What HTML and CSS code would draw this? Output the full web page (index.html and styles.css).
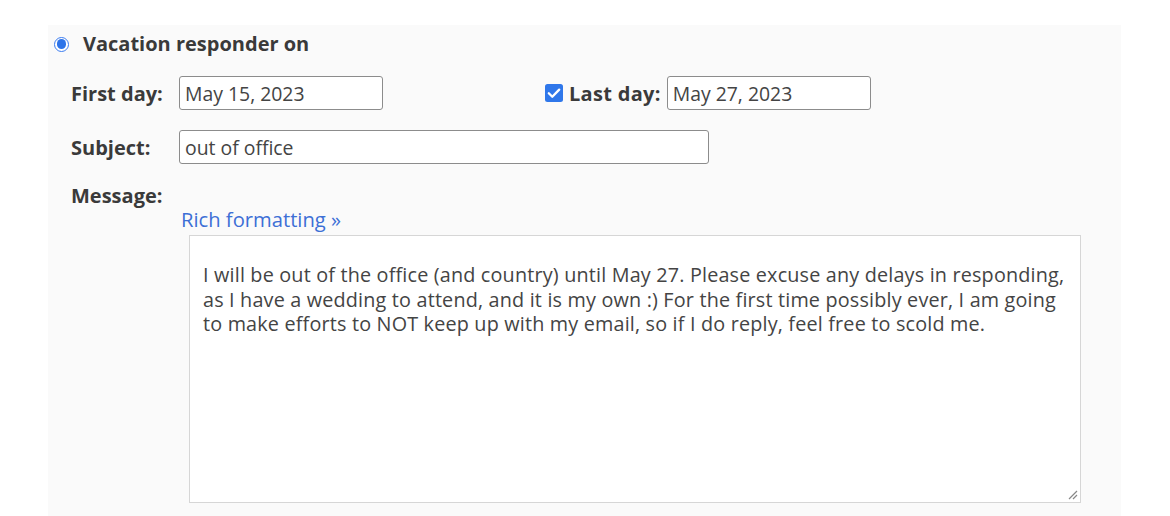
FILE: index.html
```html
<!DOCTYPE html>
<html>
<head>
<meta charset="utf-8">
<link rel="stylesheet" href="styles.css">
</head>
<body>
<div class="panel">
  <div class="head">
    <span class="radio"><span class="dot"></span></span>
    <span class="head-label">Vacation responder on</span>
  </div>
  <div class="form">
    <div class="row">
      <div class="label">First day:</div>
      <div class="field-row">
        <div class="input date">May 15, 2023</div>
        <div class="last">
          <span class="check"><svg viewBox="0 0 18 18" width="18" height="18"><rect x="0" y="0" width="18" height="18" rx="2.5" fill="#2f77ea"/><path d="M3.8 9.3 L7.3 12.7 L14.2 5.6" fill="none" stroke="#fff" stroke-width="2.3" stroke-linecap="round" stroke-linejoin="round"/></svg></span>
          <span class="label inline">Last day:</span>
          <div class="input date">May 27, 2023</div>
        </div>
      </div>
    </div>
    <div class="row">
      <div class="label">Subject:</div>
      <div class="input subject">out of office</div>
    </div>
    <div class="row msg">
      <div class="label">Message:</div>
    </div>
    <div class="rich-wrap">
      <a class="rich">Rich formatting »</a>
      <div class="textarea">I will be out of the office (and country) until May 27. Please excuse any delays in responding, as I have a wedding to attend, and it is my own :) For the first time possibly ever, I am going to make efforts to NOT keep up with my email, so if I do reply, feel free to scold me.<svg class="grip" viewBox="0 0 12 12" width="12" height="12"><path d="M11 3 L3 11 M11 7 L7 11" stroke="#888" stroke-width="1.2"/></svg></div>
    </div>
  </div>
</div>
</body>
</html>
```

FILE: styles.css
```css
* { box-sizing: border-box; }
html, body { margin: 0; padding: 0; background: #ffffff; }
body {
  font-family: "Open Sans", Roboto, "Liberation Sans", Arial, sans-serif;
  color: #3c4043;
  width: 1170px;
  height: 516px;
  overflow: hidden;
}
.panel {
  margin: 25px 0 0 48px;
  width: 1073px;
  height: 491px;
  background: #fafafa;
  padding: 7px 0 0 6px;
}
.head {
  display: flex;
  align-items: center;
  height: 22px;
}
.radio {
  width: 15px;
  height: 15px;
  border-radius: 50%;
  border: 1.5px solid #3b7cf0;
  display: flex;
  align-items: center;
  justify-content: center;
  background: #fff;
  margin-top: 2px;
}
.dot {
  width: 9.5px;
  height: 9.5px;
  border-radius: 50%;
  background: #2d74e9;
}
.head-label {
  margin-left: 14px;
  font-weight: 700;
  font-size: 20px;
  color: #3a3a3a;
}
.form {
  padding-left: 17px;
  margin-top: 22px;
}
.row {
  display: flex;
  align-items: center;
  margin-bottom: 20px;
}
.label {
  width: 108px;
  font-weight: 700;
  font-size: 20px;
  color: #3a3a3a;
}
.label.inline { width: auto; margin: 0 6px 0 6px; letter-spacing: 0.3px; }
.field-row { display: flex; align-items: center; }
.input {
  height: 34px;
  border: 1px solid #8c8c8c;
  border-radius: 3px;
  background: #fff;
  padding: 0 5px;
  font-size: 19.4px;
  color: #444;
  display: flex;
  align-items: center;
}
.date { width: 204px; }
.last { display: flex; align-items: center; margin-left: 162px; }
.check { display: flex; width: 18px; height: 18px; }
.subject { width: 530px; }
.row.msg { margin-bottom: 0; height: 22px; margin-top: 2px; }
.rich-wrap { padding-left: 108px; }
.rich {
  display: block;
  font-size: 20.2px;
  color: #3d6fd6;
  margin-left: 2px;
  line-height: 22px;
  margin-top: 2px;
}
.textarea {
  position: relative;
  margin-left: 10px;
  margin-top: 5px;
  width: 892px;
  height: 268px;
  background: #fff;
  border: 1px solid #d6d6d6;
  padding: 27px 8px 0 13px;
  font-size: 19.8px;
  letter-spacing: 0.18px;
  line-height: 24.5px;
  color: #444;
}
.grip {
  position: absolute;
  right: 2px;
  bottom: 2px;
}
```
